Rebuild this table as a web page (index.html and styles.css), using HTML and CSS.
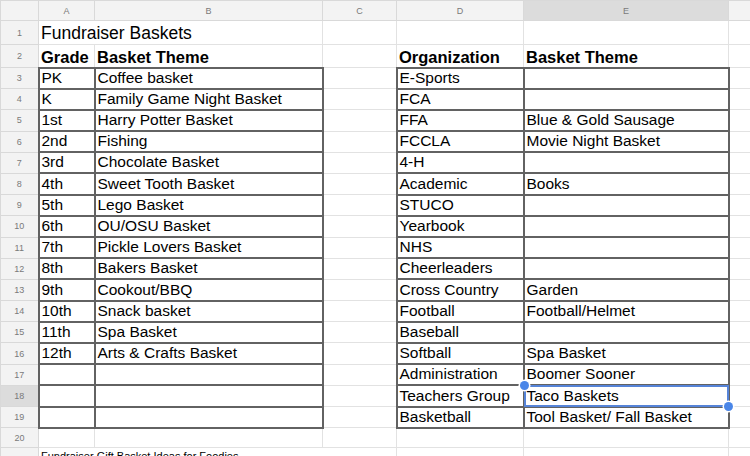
FILE: index.html
```html
<!DOCTYPE html>
<html>
<head>
<meta charset="utf-8">
<link rel="stylesheet" href="styles.css">
</head>
<body>
<table class="sheet">
  <colgroup>
    <col class="c-h"><col class="c-a"><col class="c-b"><col class="c-c"><col class="c-d"><col class="c-e"><col class="c-f">
  </colgroup>
  <tr class="hdr"><th></th><th>A</th><th>B</th><th>C</th><th>D</th><th class="sel">E</th><th></th></tr>
  <tr class="r1"><th>1</th><td colspan="2" class="title">Fundraiser Baskets</td><td></td><td></td><td></td><td></td></tr>
  <tr class="r2"><th>2</th><td class="b">Grade</td><td class="b">Basket Theme</td><td></td><td class="b">Organization</td><td class="b">Basket Theme</td><td></td></tr>
  <tr class="r"><th>3</th><td class="box">PK</td><td class="box">Coffee basket</td><td></td><td class="box">E-Sports</td><td class="box"></td><td></td></tr>
  <tr class="r"><th>4</th><td class="box">K</td><td class="box">Family Game Night Basket</td><td></td><td class="box">FCA</td><td class="box"></td><td></td></tr>
  <tr class="r"><th>5</th><td class="box">1st</td><td class="box">Harry Potter Basket</td><td></td><td class="box">FFA</td><td class="box">Blue &amp; Gold Sausage</td><td></td></tr>
  <tr class="r"><th>6</th><td class="box">2nd</td><td class="box">Fishing</td><td></td><td class="box">FCCLA</td><td class="box">Movie Night Basket</td><td></td></tr>
  <tr class="r"><th>7</th><td class="box">3rd</td><td class="box">Chocolate Basket</td><td></td><td class="box">4-H</td><td class="box"></td><td></td></tr>
  <tr class="r"><th>8</th><td class="box">4th</td><td class="box">Sweet Tooth Basket</td><td></td><td class="box">Academic</td><td class="box">Books</td><td></td></tr>
  <tr class="r"><th>9</th><td class="box">5th</td><td class="box">Lego Basket</td><td></td><td class="box">STUCO</td><td class="box"></td><td></td></tr>
  <tr class="r"><th>10</th><td class="box">6th</td><td class="box">OU/OSU Basket</td><td></td><td class="box">Yearbook</td><td class="box"></td><td></td></tr>
  <tr class="r"><th>11</th><td class="box">7th</td><td class="box">Pickle Lovers Basket</td><td></td><td class="box">NHS</td><td class="box"></td><td></td></tr>
  <tr class="r"><th>12</th><td class="box">8th</td><td class="box">Bakers Basket</td><td></td><td class="box">Cheerleaders</td><td class="box"></td><td></td></tr>
  <tr class="r"><th>13</th><td class="box">9th</td><td class="box">Cookout/BBQ</td><td></td><td class="box">Cross Country</td><td class="box">Garden</td><td></td></tr>
  <tr class="r"><th>14</th><td class="box">10th</td><td class="box">Snack basket</td><td></td><td class="box">Football</td><td class="box">Football/Helmet</td><td></td></tr>
  <tr class="r"><th>15</th><td class="box">11th</td><td class="box">Spa Basket</td><td></td><td class="box">Baseball</td><td class="box"></td><td></td></tr>
  <tr class="r"><th>16</th><td class="box">12th</td><td class="box">Arts &amp; Crafts Basket</td><td></td><td class="box">Softball</td><td class="box">Spa Basket</td><td></td></tr>
  <tr class="r"><th>17</th><td class="box"></td><td class="box"></td><td></td><td class="box">Administration</td><td class="box">Boomer Sooner</td><td></td></tr>
  <tr class="r"><th class="sel">18</th><td class="box"></td><td class="box"></td><td></td><td class="box">Teachers Group</td><td class="box active">Taco Baskets<div class="selbox"><span class="handle tl"></span><span class="handle br"></span></div></td><td></td></tr>
  <tr class="r"><th>19</th><td class="box"></td><td class="box"></td><td></td><td class="box">Basketball</td><td class="box">Tool Basket/ Fall Basket</td><td></td></tr>
  <tr class="r20"><th>20</th><td></td><td></td><td></td><td></td><td></td><td></td></tr>
  <tr class="r21"><th></th><td colspan="3" class="note">Fundraiser Gift Basket Ideas for Foodies</td><td></td><td></td><td></td></tr>
</table>
</body>
</html>
```
FILE: styles.css
```css
html, body {
  margin: 0;
  padding: 0;
  background: #fff;
  overflow: hidden;
  width: 750px;
  height: 456px;
}

.sheet {
  border-collapse: collapse;
  table-layout: fixed;
  width: 750px;
  font-family: "Liberation Sans", Arial, sans-serif;
}

.c-h { width: 38px; }
.c-a { width: 56px; }
.c-b { width: 228px; }
.c-c { width: 74px; }
.c-d { width: 127px; }
.c-e { width: 205px; }
.c-f { width: 22px; }

th, td {
  padding: 0;
  border: 1px solid #e2e2e2;
  white-space: nowrap;
  overflow: visible;
}

th {
  background: #f3f3f3;
  color: #7a7a7a;
  font-weight: normal;
  font-size: 9px;
  text-align: center;
  vertical-align: middle;
  border-color: #d9d9d9;
}

th.sel {
  background: #dcdcdc;
}

td {
  font-size: 15.5px;
  color: #000;
  padding: 0 2px 1px;
  vertical-align: bottom;
  line-height: 18px;
}

.hdr { height: 20px; }
.r1 { height: 24px; }
.r2 { height: 23px; }
.r { height: 21.2px; }
.r20 { height: 20px; }
.r21 { height: 20px; }

.title {
  font-size: 17.5px;
  line-height: 20px;
}

.b {
  font-weight: bold;
  font-size: 16.5px;
}

td.box {
  border: 2px solid #626262;
}

td.active {
  position: relative;
}

.selbox {
  position: absolute;
  left: -1px;
  top: -1px;
  right: -1px;
  bottom: -1px;
  border: 2px solid #5684d8;
  pointer-events: none;
}

.handle {
  position: absolute;
  width: 9px;
  height: 9px;
  border-radius: 50%;
  background: #4a86e8;
  box-shadow: 0 0 0 1.5px #fff;
}

.handle.tl { left: -6px; top: -6px; }
.handle.br { right: -6px; bottom: -6px; }

.note {
  font-size: 11px;
  line-height: 13px;
  vertical-align: top;
  padding-top: 2px;
}
```
